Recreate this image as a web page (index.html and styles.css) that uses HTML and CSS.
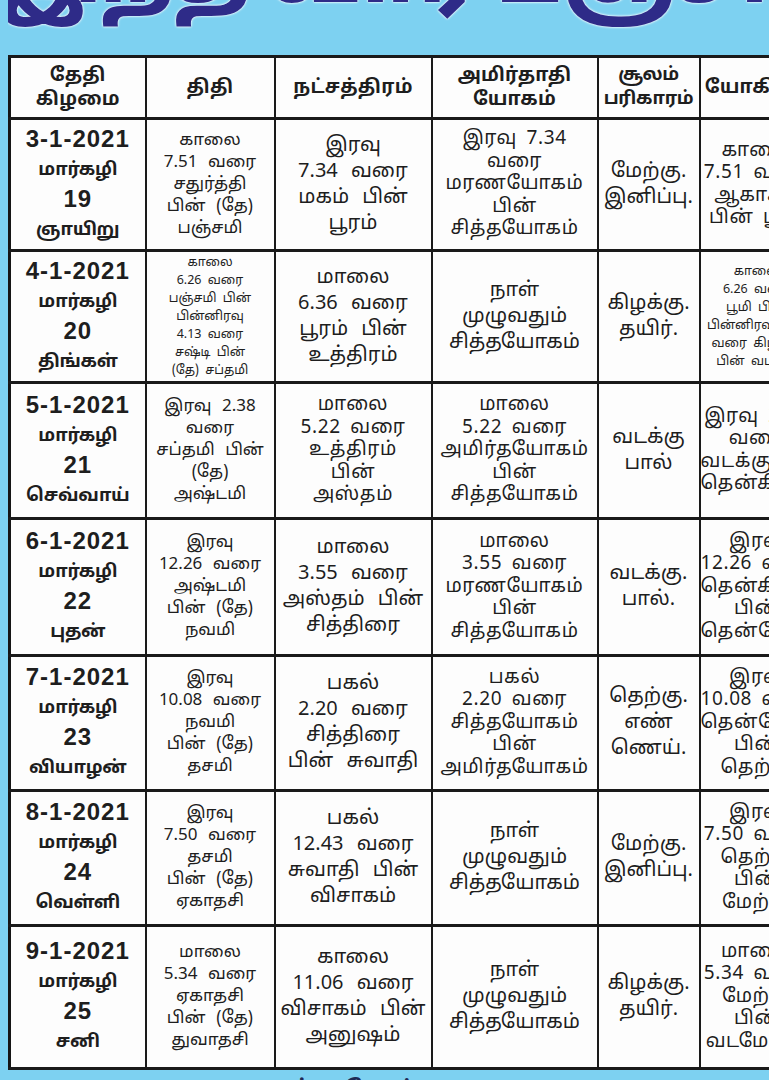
FILE: index.html
```html
<!DOCTYPE html>
<html lang="ta">
<head>
<meta charset="utf-8">
<title>பஞ்சாங்கம்</title>
<link rel="stylesheet" href="styles.css">
</head>
<body>
<div class="page">
  <div class="banner"><h1 class="title">இந்த வார பஞ்சாங்கம் குறிப்பு</h1></div>
  <table class="almanac">
    <colgroup>
      <col class="c-date"><col class="c-thithi"><col class="c-star"><col class="c-yogam"><col class="c-soolam"><col class="c-yogini">
    </colgroup>
    <thead>
      <tr class="head">
        <th>தேதி<br>கிழமை</th>
        <th>திதி</th>
        <th>நட்சத்திரம்</th>
        <th>அமிர்தாதி<br>யோகம்</th>
        <th class="tight">சூலம்<br>பரிகாரம்</th>
        <th>யோகினி</th>
      </tr>
    </thead>
    <tbody>
      <tr>
        <td class="date"><b>3-1-2021</b><br>மார்கழி<br><b>19</b><br>ஞாயிறு</td>
        <td class="sm">காலை<br>7.51 வரை<br>சதுர்த்தி<br>பின் (தே)<br>பஞ்சமி</td>
        <td>இரவு<br>7.34 வரை<br>மகம் பின்<br>பூரம்</td>
        <td class="md">இரவு 7.34<br>வரை<br>மரணயோகம்<br>பின்<br>சித்தயோகம்</td>
        <td>மேற்கு.<br>இனிப்பு.</td>
        <td class="md">காலை<br>7.51 வரை<br>ஆகாசம்<br>பின் பூமி</td>
      </tr>
      <tr>
        <td class="date"><b>4-1-2021</b><br>மார்கழி<br><b>20</b><br>திங்கள்</td>
        <td class="xs">காலை<br>6.26 வரை<br>பஞ்சமி பின்<br>பின்னிரவு<br>4.13 வரை<br>சஷ்டி பின்<br>(தே) சப்தமி</td>
        <td>மாலை<br>6.36 வரை<br>பூரம் பின்<br>உத்திரம்</td>
        <td>நாள்<br>முழுவதும்<br>சித்தயோகம்</td>
        <td>கிழக்கு.<br>தயிர்.</td>
        <td class="xs">காலை<br>6.26 வரை<br>பூமி பின்<br>பின்னிரவு 4.13<br>வரை கிழக்கு<br>பின் வடக்கு</td>
      </tr>
      <tr>
        <td class="date"><b>5-1-2021</b><br>மார்கழி<br><b>21</b><br>செவ்வாய்</td>
        <td class="sm">இரவு 2.38<br>வரை<br>சப்தமி பின்<br>(தே)<br>அஷ்டமி</td>
        <td class="md">மாலை<br>5.22 வரை<br>உத்திரம்<br>பின்<br>அஸ்தம்</td>
        <td class="md">மாலை<br>5.22 வரை<br>அமிர்தயோகம்<br>பின்<br>சித்தயோகம்</td>
        <td>வடக்கு<br>பால்</td>
        <td class="md">இரவு 2.38<br>வரை<br>வடக்கு பின்<br>தென்கிழக்கு</td>
      </tr>
      <tr>
        <td class="date"><b>6-1-2021</b><br>மார்கழி<br><b>22</b><br>புதன்</td>
        <td class="sm">இரவு<br>12.26 வரை<br>அஷ்டமி<br>பின் (தே)<br>நவமி</td>
        <td>மாலை<br>3.55 வரை<br>அஸ்தம் பின்<br>சித்திரை</td>
        <td class="md">மாலை<br>3.55 வரை<br>மரணயோகம்<br>பின்<br>சித்தயோகம்</td>
        <td>வடக்கு.<br>பால்.</td>
        <td class="md">இரவு<br>12.26 வரை<br>தென்கிழக்கு<br>பின்<br>தென்மேற்கு</td>
      </tr>
      <tr>
        <td class="date"><b>7-1-2021</b><br>மார்கழி<br><b>23</b><br>வியாழன்</td>
        <td class="sm">இரவு<br>10.08 வரை<br>நவமி<br>பின் (தே)<br>தசமி</td>
        <td>பகல்<br>2.20 வரை<br>சித்திரை<br>பின் சுவாதி</td>
        <td class="md">பகல்<br>2.20 வரை<br>சித்தயோகம்<br>பின்<br>அமிர்தயோகம்</td>
        <td>தெற்கு.<br>எண்<br>ணெய்.</td>
        <td class="md">இரவு<br>10.08 வரை<br>தென்மேற்கு<br>பின்<br>தெற்கு</td>
      </tr>
      <tr>
        <td class="date"><b>8-1-2021</b><br>மார்கழி<br><b>24</b><br>வெள்ளி</td>
        <td class="sm">இரவு<br>7.50 வரை<br>தசமி<br>பின் (தே)<br>ஏகாதசி</td>
        <td>பகல்<br>12.43 வரை<br>சுவாதி பின்<br>விசாகம்</td>
        <td>நாள்<br>முழுவதும்<br>சித்தயோகம்</td>
        <td>மேற்கு.<br>இனிப்பு.</td>
        <td class="md">இரவு<br>7.50 வரை<br>தெற்கு<br>பின்<br>மேற்கு</td>
      </tr>
      <tr>
        <td class="date"><b>9-1-2021</b><br>மார்கழி<br><b>25</b><br>சனி</td>
        <td class="sm">மாலை<br>5.34 வரை<br>ஏகாதசி<br>பின் (தே)<br>துவாதசி</td>
        <td>காலை<br>11.06 வரை<br>விசாகம் பின்<br>அனுஷம்</td>
        <td>நாள்<br>முழுவதும்<br>சித்தயோகம்</td>
        <td>கிழக்கு.<br>தயிர்.</td>
        <td class="md">மாலை<br>5.34 வரை<br>மேற்கு<br>பின்<br>வடமேற்கு</td>
      </tr>
    </tbody>
  </table>
  <div class="footer"><span class="foot-text">நல்ல நேரம்</span></div>
</div>
</body>
</html>
```

FILE: styles.css
```css
html, body {
  margin: 0;
  padding: 0;
}
body {
  background: #7dd1f1;
  width: 769px;
  height: 1080px;
  overflow: hidden;
  font-family: "Noto Sans Tamil", "Lohit Tamil", "Noto Sans", "Liberation Sans", sans-serif;
  color: #1e1e1e;
}
.page {
  padding-left: 8px;
}
.banner {
  height: 55px;
  overflow: hidden;
  display: flex;
  align-items: flex-end;
}
.title {
  margin: 0 0 33px -6px;
  font-size: 78px;
  line-height: 1;
  font-weight: 900;
  white-space: nowrap;
  color: #2e2b88;
  text-shadow: 0 0 3px #ffffff, 0 0 2px #ffffff;
}
.almanac {
  table-layout: fixed;
  border-collapse: collapse;
  width: 804px;
  background: #fdfdfd;
  border: 3px solid #151515;
}
.c-date { width: 136px; }
.c-thithi { width: 129px; }
.c-star { width: 157px; }
.c-yogam { width: 166px; }
.c-soolam { width: 102px; }
.c-yogini { width: 114px; }

.almanac th,
.almanac td {
  border-left: 2px solid #1a1a1a;
  border-right: 2px solid #1a1a1a;
  border-top: 3px solid #1a1a1a;
  border-bottom: 3px solid #1a1a1a;
  text-align: center;
  vertical-align: middle;
  padding: 0;
  overflow: hidden;
  white-space: nowrap;
}
.head th {
  height: 59px;
  font-size: 19px;
  line-height: 24px;
  font-weight: 700;
  letter-spacing: 0.3px;
}
.head th.tight {
  font-size: 18px;
  letter-spacing: -0.3px;
}
.almanac td {
  height: 129px;
  font-size: 20px;
  line-height: 26px;
  word-spacing: 8px;
}
.almanac tbody tr:nth-child(3) td {
  height: 133px;
}
.almanac tbody tr:nth-child(4) td {
  height: 134px;
}
.almanac tbody tr:nth-child(5) td,
.almanac tbody tr:nth-child(6) td {
  height: 132px;
}
.almanac tbody tr:nth-child(7) td {
  height: 140px;
}
.almanac td.date {
  font-size: 18px;
  line-height: 28px;
  font-weight: 700;
  letter-spacing: -0.3px;
  word-spacing: 0;
}
.almanac td.date b {
  font-family: "Liberation Sans", Arial, sans-serif;
  font-size: 24px;
  letter-spacing: 1px;
}
.almanac td.sm {
  font-size: 17px;
  line-height: 22px;
  word-spacing: 6px;
}
.almanac td.md {
  font-size: 19px;
  line-height: 22.5px;
  letter-spacing: 0.6px;
  word-spacing: 4px;
}
.almanac td.xs {
  font-size: 12.5px;
  line-height: 18px;
  word-spacing: 3px;
}
.footer {
  height: 14px;
  overflow: hidden;
  display: flex;
  justify-content: center;
  padding-right: 90px;
}
.foot-text {
  margin-top: 7px;
  font-size: 22px;
  font-weight: 700;
  color: #1f2a55;
}
```
